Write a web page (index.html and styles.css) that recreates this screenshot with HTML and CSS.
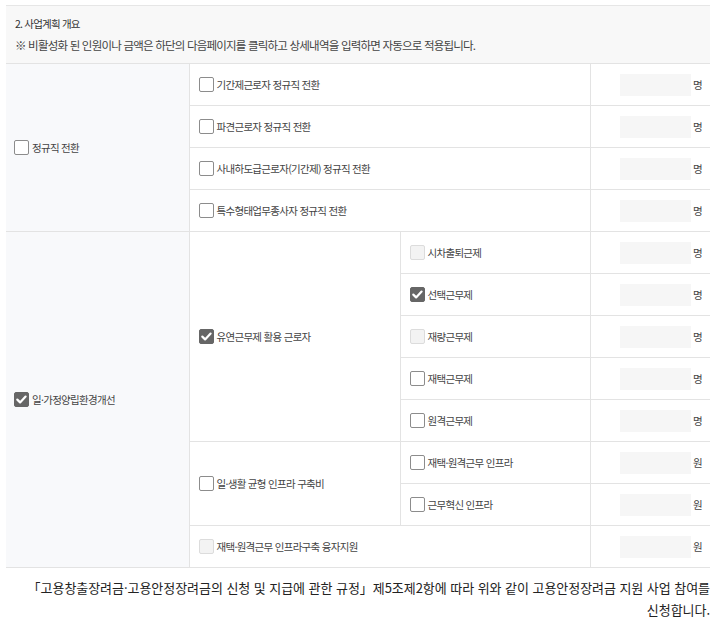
FILE: index.html
```html
<!DOCTYPE html>
<html lang="ko">
<head>
<meta charset="utf-8">
<link rel="stylesheet" href="styles.css">
</head>
<body>
<div class="page">
  <div class="head">
    <div class="title">2. 사업계획 개요</div>
    <div class="note">※ 비활성화 된 인원이나 금액은 하단의 다음페이지를 클릭하고 상세내역을 입력하면 자동으로 적용됩니다.</div>
  </div>
  <table class="plan">
    <colgroup><col class="c1"><col class="c2"><col class="c3"><col class="c4"></colgroup>
    <tr>
      <td rowspan="4" class="cat"><label class="chk"><span class="box"></span>정규직 전환</label></td>
      <td colspan="2"><label class="chk"><span class="box"></span>기간제근로자 정규직 전환</label></td>
      <td class="num"><span class="inp"></span><span class="unit">명</span></td>
    </tr>
    <tr>
      <td colspan="2"><label class="chk"><span class="box"></span>파견근로자 정규직 전환</label></td>
      <td class="num"><span class="inp"></span><span class="unit">명</span></td>
    </tr>
    <tr>
      <td colspan="2"><label class="chk"><span class="box"></span>사내하도급근로자(기간제) 정규직 전환</label></td>
      <td class="num"><span class="inp"></span><span class="unit">명</span></td>
    </tr>
    <tr>
      <td colspan="2"><label class="chk"><span class="box"></span>특수형태업무종사자 정규직 전환</label></td>
      <td class="num"><span class="inp"></span><span class="unit">명</span></td>
    </tr>
    <tr>
      <td rowspan="8" class="cat"><label class="chk"><span class="box on"></span>일·가정양립환경개선</label></td>
      <td rowspan="5"><label class="chk"><span class="box on"></span>유연근무제 활용 근로자</label></td>
      <td><label class="chk"><span class="box off"></span>시차출퇴근제</label></td>
      <td class="num"><span class="inp"></span><span class="unit">명</span></td>
    </tr>
    <tr>
      <td><label class="chk"><span class="box on"></span>선택근무제</label></td>
      <td class="num"><span class="inp"></span><span class="unit">명</span></td>
    </tr>
    <tr>
      <td><label class="chk"><span class="box off"></span>재량근무제</label></td>
      <td class="num"><span class="inp"></span><span class="unit">명</span></td>
    </tr>
    <tr>
      <td><label class="chk"><span class="box"></span>재택근무제</label></td>
      <td class="num"><span class="inp"></span><span class="unit">명</span></td>
    </tr>
    <tr>
      <td><label class="chk"><span class="box"></span>원격근무제</label></td>
      <td class="num"><span class="inp"></span><span class="unit">명</span></td>
    </tr>
    <tr>
      <td rowspan="2"><label class="chk"><span class="box"></span>일·생활 균형 인프라 구축비</label></td>
      <td><label class="chk"><span class="box"></span>재택·원격근무 인프라</label></td>
      <td class="num"><span class="inp"></span><span class="unit">원</span></td>
    </tr>
    <tr>
      <td><label class="chk"><span class="box"></span>근무혁신 인프라</label></td>
      <td class="num"><span class="inp"></span><span class="unit">원</span></td>
    </tr>
    <tr>
      <td colspan="2"><label class="chk"><span class="box off"></span>재택·원격근무 인프라구축 융자지원</label></td>
      <td class="num"><span class="inp"></span><span class="unit">원</span></td>
    </tr>
  </table>
  <p class="agree">「고용창출장려금·고용안정장려금의 신청 및 지급에 관한 규정」제5조제2항에 따라 위와 같이 고용안정장려금 지원 사업 참여를 신청합니다.</p>
</div>
</body>
</html>
```

FILE: styles.css
```css
* { box-sizing: border-box; }
html, body { margin: 0; padding: 0; background: #fff; }
body {
  font-family: "Noto Sans CJK KR", "Noto Sans", sans-serif;
  color: #444;
}
.page {
  width: 727px;
  padding: 5px 17px 0 6px;
}
.head {
  border-top: 1px solid #e6e6e6;
  background: #f8f8f8;
  height: 58px;
  padding: 10px 0 0 9px;
}
.title {
  font-size: 10.5px;
  letter-spacing: -0.8px;
  color: #333;
  line-height: 15px;
}
.note {
  margin-top: 6px;
  font-size: 11.5px;
  letter-spacing: -0.8px;
  color: #444;
  line-height: 16px;
}
.plan {
  width: 704px;
  border-collapse: collapse;
  table-layout: fixed;
}
.c1 { width: 183px; }
.c2 { width: 211px; }
.c3 { width: 190px; }
.c4 { width: 120px; }
.plan td {
  height: 42px;
  padding: 0 0 0 9px;
  border: 1px solid #e3e3e3;
  vertical-align: middle;
  font-size: 10.5px;
  letter-spacing: -0.7px;
  color: #444;
}
.plan tr td:first-child { border-left: none; }
.plan td.num { border-right: none; }
.plan td.cat {
  background: #f8f9fb;
  padding-left: 8px;
}
.chk {
  display: flex;
  align-items: center;
  gap: 3px;
  line-height: 15px;
}
.box {
  flex: none;
  width: 15px;
  height: 15px;
  border: 1px solid #8c8c8c;
  border-radius: 2px;
  background: #fff;
}
.box.off {
  border-color: #dcdcdc;
  background: #f3f3f3;
}
.box.on {
  border-color: #666;
  background: #666 url("data:image/svg+xml,%3Csvg xmlns='http://www.w3.org/2000/svg' viewBox='0 0 15 15'%3E%3Cpath d='M3.3 7.6 L6.1 10.4 L11.6 4.6' fill='none' stroke='white' stroke-width='2.2' stroke-linecap='round' stroke-linejoin='round'/%3E%3C/svg%3E") center/15px 15px no-repeat;
}
.plan td.num {
  text-align: right;
  padding: 0 8px 0 0;
}
.num .inp {
  display: inline-block;
  vertical-align: middle;
  width: 71px;
  height: 22px;
  background: #f6f6f6;
}
.num .unit {
  display: inline-block;
  vertical-align: middle;
  margin-left: 2px;
  font-size: 10.5px;
  color: #444;
}
.agree {
  margin: 9px 0 0;
  text-align: right;
  font-size: 13px;
  letter-spacing: -0.05px;
  line-height: 22px;
  color: #222;
  word-break: keep-all;
}
```
